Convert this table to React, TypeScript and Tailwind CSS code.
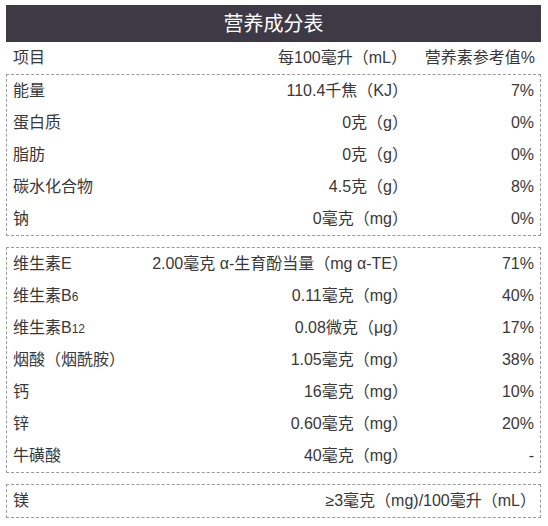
import React from 'react';

type Row = { name: React.ReactNode; amount: string; nrv: string };

const basic: Row[] = [
  { name: '能量', amount: '110.4千焦（KJ）', nrv: '7%' },
  { name: '蛋白质', amount: '0克（g）', nrv: '0%' },
  { name: '脂肪', amount: '0克（g）', nrv: '0%' },
  { name: '碳水化合物', amount: '4.5克（g）', nrv: '8%' },
  { name: '钠', amount: '0毫克（mg）', nrv: '0%' },
];

const vitamins: Row[] = [
  { name: '维生素E', amount: '2.00毫克 α-生育酚当量（mg α-TE）', nrv: '71%' },
  {
    name: (
      <>
        维生素B<span className="text-[12px]">6</span>
      </>
    ),
    amount: '0.11毫克（mg）',
    nrv: '40%',
  },
  {
    name: (
      <>
        维生素B<span className="text-[12px]">12</span>
      </>
    ),
    amount: '0.08微克（μg）',
    nrv: '17%',
  },
  { name: '烟酸（烟酰胺）', amount: '1.05毫克（mg）', nrv: '38%' },
  { name: '钙', amount: '16毫克（mg）', nrv: '10%' },
  { name: '锌', amount: '0.60毫克（mg）', nrv: '20%' },
  { name: '牛磺酸', amount: '40毫克（mg）', nrv: '-' },
];

const TableRow = ({ row }: { row: Row }) => (
  <div className="flex h-[32px] items-center pl-[6px] pr-[6px]">
    <div className="flex-1 whitespace-nowrap">{row.name}</div>
    <div className="whitespace-nowrap text-right">{row.amount}</div>
    <div className="w-[126px] text-right">{row.nrv}</div>
  </div>
);

const Box = ({ children }: { children: React.ReactNode }) => (
  <div className="border border-dashed border-[#9a9a9a]">{children}</div>
);

export default function App() {
  return (
    <div
      className="w-[548px] h-[526px] bg-white pt-[5px] pl-[6px] pr-[7px] text-[16px] text-[#383838]"
      style={{ fontFamily: '"Liberation Sans", "Noto Sans CJK SC", sans-serif' }}
    >
      <div className="flex h-[37px] items-center justify-center bg-[#3d3a45] text-[20px] text-white">
        营养成分表
      </div>

      <div className="flex h-[32px] items-center pl-[7px] pr-[6px]">
        <div className="flex-1">项目</div>
        <div className="text-right">每100毫升（mL）</div>
        <div className="w-[128px] text-right">营养素参考值%</div>
      </div>

      <div className="flex flex-col gap-[11px]">
        <Box>
          {basic.map((r, i) => (
            <TableRow key={i} row={r} />
          ))}
        </Box>

        <Box>
          {vitamins.map((r, i) => (
            <TableRow key={i} row={r} />
          ))}
        </Box>

        <Box>
          <div className="flex h-[32px] items-center pl-[6px] pr-[4px]">
            <div className="flex-1">镁</div>
            <div className="whitespace-nowrap">≥3毫克（mg)/100毫升（mL）</div>
          </div>
        </Box>
      </div>
    </div>
  );
}
